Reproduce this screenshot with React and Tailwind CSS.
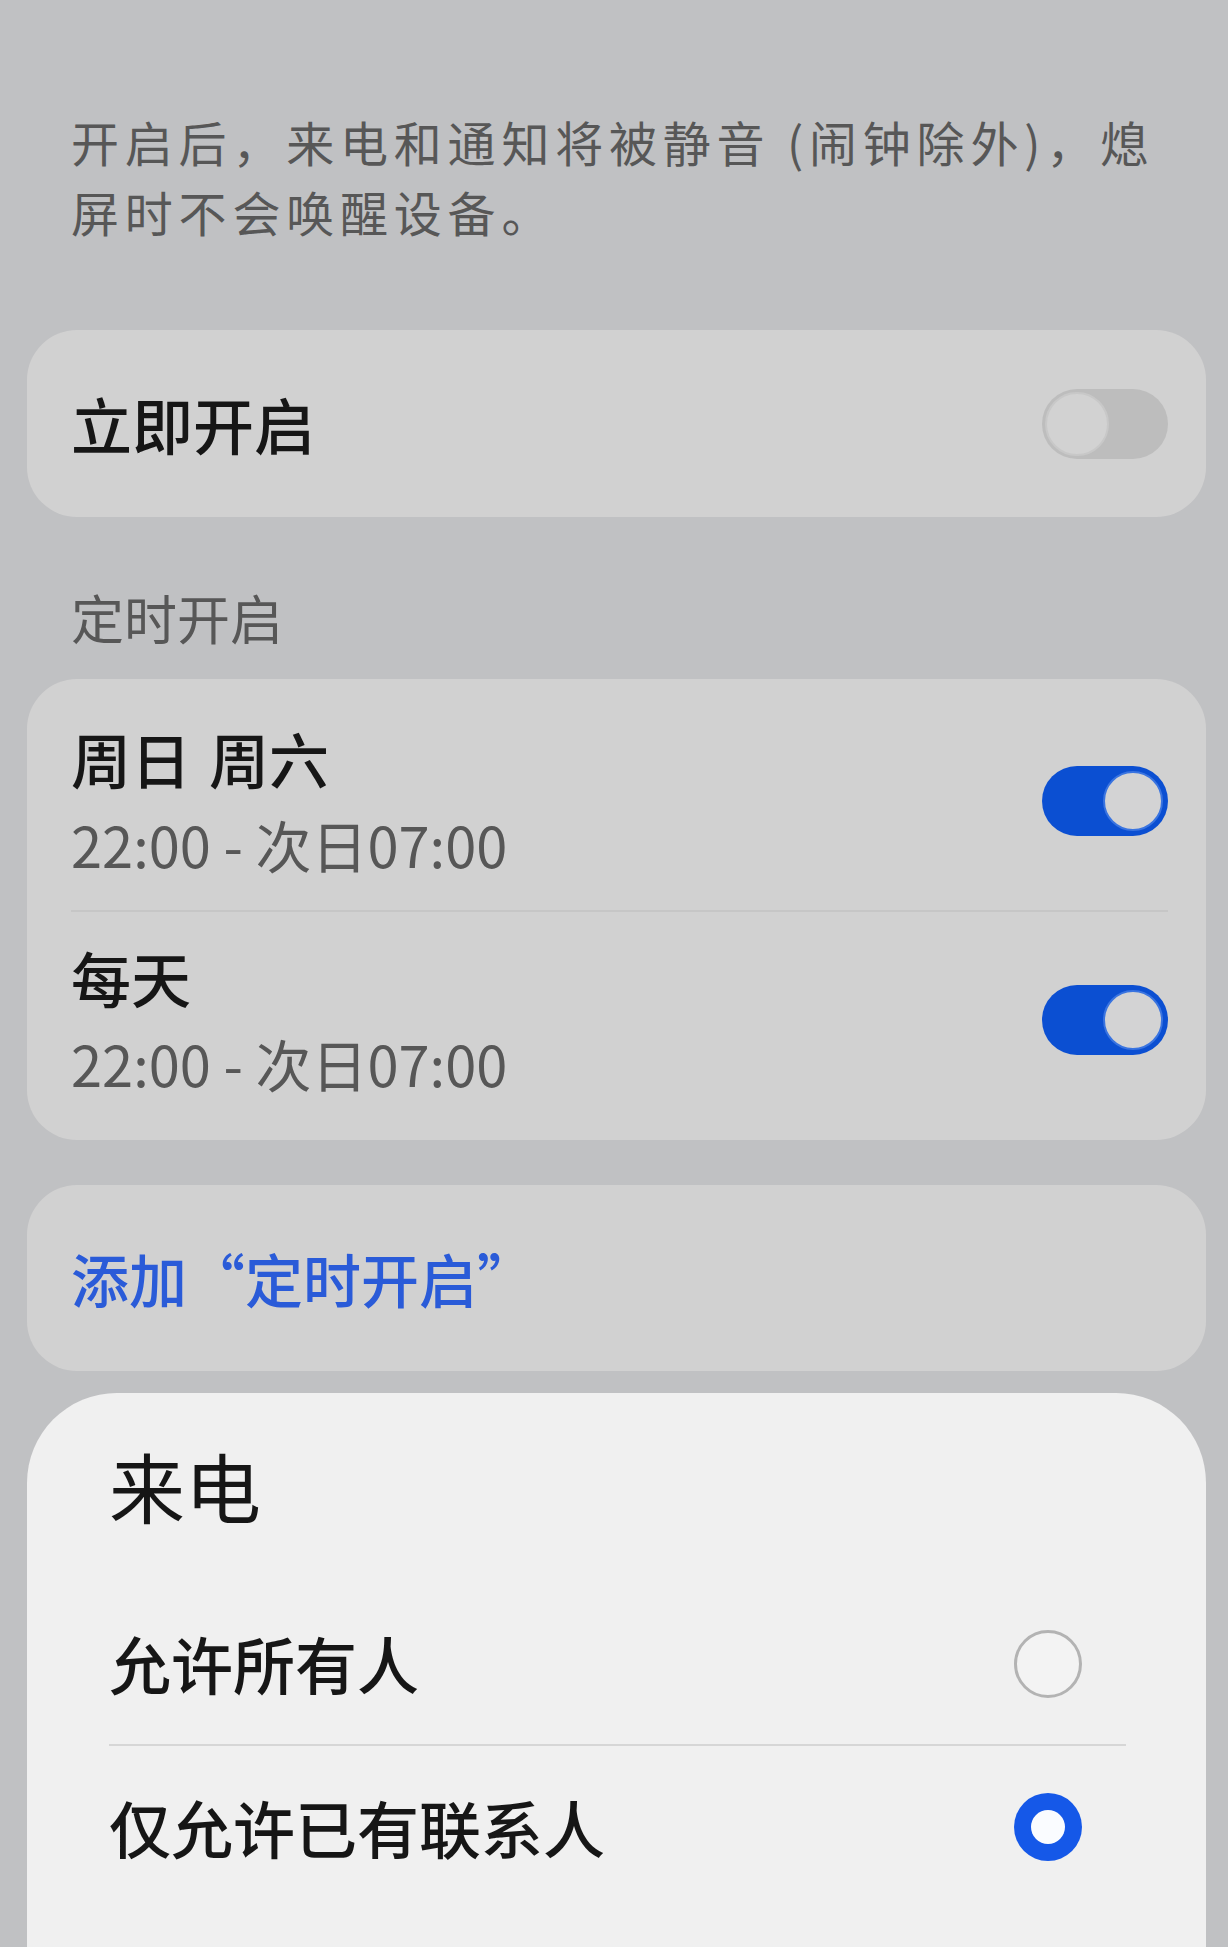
import React from "react";

const font = { fontFamily: '"Noto Sans CJK SC", "Noto Sans", sans-serif' };

function Toggle({ on }) {
  return on ? (
    <div className="flex h-[70px] w-[126px] shrink-0 items-center justify-end rounded-full bg-[#0b4fd2] pr-[5px]">
      <div className="h-[60px] w-[60px] rounded-full border-2 border-[#3a74e0] bg-[#d3d3d4]" />
    </div>
  ) : (
    <div className="flex h-[70px] w-[126px] shrink-0 items-center justify-start rounded-full bg-[#bdbdbd] pl-[3px]">
      <div className="h-[64px] w-[64px] rounded-full border-2 border-[#c8c8c8] bg-[#d2d2d2]" />
    </div>
  );
}

function Radio({ checked }) {
  return checked ? (
    <div className="flex h-[68px] w-[68px] shrink-0 items-center justify-center rounded-full bg-[#1558e8]">
      <div className="h-[34px] w-[34px] rounded-full bg-[#fafcff]" />
    </div>
  ) : (
    <div className="h-[68px] w-[68px] shrink-0 rounded-full border-[3px] border-[#b3b3b3] bg-[#f3f3f3]" />
  );
}

const schedules = [
  { days: ["周日", "周六"], time: "22:00 - 次日07:00" },
  { days: ["每天"], time: "22:00 - 次日07:00" },
];

export default function App() {
  return (
    <div style={font} className="min-h-[1947px] w-full overflow-hidden bg-[#c0c1c3] pl-[27px] pr-[22px]">
      {/* description */}
      <div className="pl-[44px] pt-[106px] text-[48px] leading-[70px] tracking-[5.8px] text-[#575757]">
        <span className="block">开启后，来电和通知将被静音 (闹钟除外)，熄</span>
        <span className="block">屏时不会唤醒设备。</span>
      </div>

      {/* immediate */}
      <div className="mt-[84px] flex h-[187px] items-center justify-between rounded-[50px] bg-[#d1d1d1] pl-[44px] pr-[38px]">
        <span className="text-[61px] font-medium text-[#161616]">立即开启</span>
        <Toggle on={false} />
      </div>

      {/* scheduled */}
      <div className="mt-[65px] pl-[44px] text-[53px] leading-[70px] text-[#575757]">定时开启</div>
      <div className="mt-[27px] rounded-[50px] bg-[#d1d1d1] pl-[44px] pr-[38px]">
        {schedules.map((s, i) => (
          <div
            key={i}
            className={
              i === 0
                ? "flex items-center justify-between border-b-2 border-[#c6c6c6] pb-[28px] pt-[41px]"
                : "flex items-center justify-between pb-[39px] pt-[27px]"
            }
          >
            <div className="flex flex-col gap-[10px]">
              <span className="flex gap-[18px] text-[60px] font-medium leading-[76px] text-[#161616]">
                {s.days.map((d) => (
                  <span key={d}>{d}</span>
                ))}
              </span>
              <span className="text-[56px] leading-[76px] text-[#575757]">{s.time}</span>
            </div>
            <Toggle on />
          </div>
        ))}
      </div>

      {/* add */}
      <div className="mt-[45px] flex h-[186px] items-center rounded-[50px] bg-[#d1d1d1] pl-[44px]">
        <span className="text-[58px] font-medium text-[#2a5bd8]">添加“定时开启”</span>
      </div>

      {/* sheet */}
      <div className="mt-[22px] min-h-[560px] rounded-t-[90px] bg-[#f0f0f0] pl-[82px] pr-[80px] pt-[47px]">
        <div className="text-[76px] leading-[90px] text-[#161616]">来电</div>
        <div className="mt-[53px] flex h-[163px] items-center justify-between border-b-2 border-[#d6d6d6] pr-[44px]">
          <span className="text-[62px] font-medium text-[#161616]">允许所有人</span>
          <Radio checked={false} />
        </div>
        <div className="flex h-[162px] items-center justify-between pr-[44px]">
          <span className="text-[62px] font-medium text-[#161616]">仅允许已有联系人</span>
          <Radio checked />
        </div>
      </div>
    </div>
  );
}
